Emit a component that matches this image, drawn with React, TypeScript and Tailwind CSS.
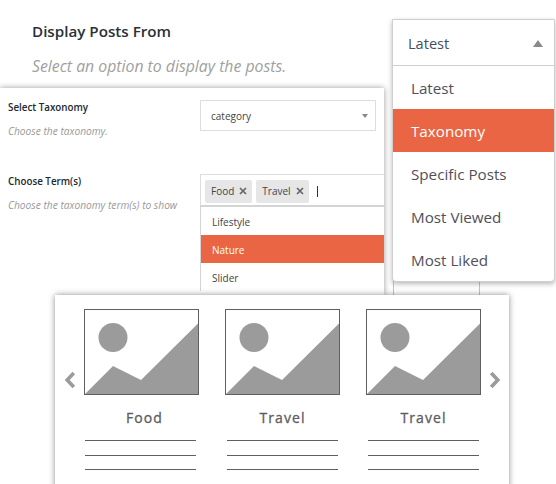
const font = "font-['Open_Sans','Noto_Sans',sans-serif]";

function Placeholder() {
  return (
    <svg width="115" height="86" viewBox="0 0 115 86" className="block">
      <rect x="0.5" y="0.5" width="114" height="85" fill="#fff" stroke="#5f5f5f" />
      <circle cx="29" cy="28.5" r="14.5" fill="#9b9b9b" />
      <path d="M1 85 L29 57 L57 71 L114 14.5 L114 85 Z" fill="#9b9b9b" />
      <path d="M114.5 0.5 V85.5 H0.5" fill="none" stroke="#5f5f5f" />
    </svg>
  );
}

function Card({ label, labelClass, linesClass }: { label: string; labelClass: string; linesClass: string }) {
  return (
    <div className="w-[115px] shrink-0">
      <Placeholder />
      <div className={`mt-[12px] h-[22px] text-center text-[14px] leading-[22px] tracking-[1.1px] text-[#5c5c62] [-webkit-text-stroke:0.3px_#5c5c62] ${labelClass}`}>
        {label}
      </div>
      <div className={`mt-[11px] flex w-[111px] flex-col ${linesClass}`}>
        <div className="h-px bg-[#5f5f5f]" />
        <div className="mt-[14px] h-px bg-[#5f5f5f]" />
        <div className="mt-[13px] h-px bg-[#5f5f5f]" />
      </div>
    </div>
  );
}

function Tag({ label }: { label: string }) {
  return (
    <span className="flex h-[23px] items-center gap-[5px] rounded-[2px] bg-[#e6e6e6] pr-[5px] pl-[6px] text-[10px] text-[#444]">
      {label}
      <svg width="8" height="8" viewBox="0 0 8 8">
        <path d="M1 1 L7 7 M7 1 L1 7" stroke="#666" strokeWidth="1.7" />
      </svg>
    </span>
  );
}

function Arrow({ dir }: { dir: "l" | "r" }) {
  return (
    <svg width="12" height="18" viewBox="0 0 12 18" className="shrink-0">
      <path
        d={dir === "l" ? "M9.8 2 L3.2 9 L9.8 16" : "M2.2 2 L8.8 9 L2.2 16"}
        fill="none"
        stroke="#9b9b9b"
        strokeWidth="3.6"
      />
    </svg>
  );
}

export default function App() {
  const opts = ["Latest", "Taxonomy", "Specific Posts", "Most Viewed", "Most Liked"];
  return (
    <div className={`relative h-[484px] w-[556px] overflow-hidden bg-white ${font}`}>
      {/* Heading */}
      <div className="pt-[21px] pl-[32px]">
        <div className="text-[15.2px] leading-[21px] font-semibold text-[#2b3035]">Display Posts From</div>
        <div className="mt-[13px] text-[15.8px] leading-[22px] text-[#a0a0a0] italic">
          Select an option to display the posts.
        </div>
      </div>

      {/* Element behind the panels */}
      <div className="absolute top-[275px] left-[393px] h-[30px] w-[87px] border-x border-[#c4c4c4]" />

      {/* Main select */}
      <div className="absolute top-[19px] left-[392px] w-[163px] rounded-b-[4px] border border-[#cfcfcf] bg-white shadow-[0_2px_5px_rgba(0,0,0,0.28)]">
        <div className="flex h-[46px] items-center justify-between border-b border-[#cfcfcf] pt-[2px] pr-[11px] pl-[15px] text-[14.6px] text-[#44505c]">
          Latest
          <svg width="10" height="7" viewBox="0 0 10 7">
            <path d="M5 0 L10 7 L0 7 Z" fill="#8a8a8a" />
          </svg>
        </div>
        <div>
          {opts.map((o) => (
            <div
              key={o}
              className={`flex h-[43px] items-center pt-[2px] pl-[18px] text-[15.2px] ${
                o === "Taxonomy" ? "bg-[#e96544] text-white" : "text-[#50505a]"
              }`}
            >
              {o}
            </div>
          ))}
        </div>
      </div>

      {/* Settings panel */}
      <div className="absolute top-[88px] left-0 h-[207px] w-[384px] bg-white shadow-[0_0_6px_rgba(0,0,0,0.4)] [clip-path:inset(-10px_-10px_0_0)]">
        <div className="flex h-[86px] pt-[12px] pr-[8px] pl-[8px]">
          <div className="w-[192px]">
            <div className="text-[9.8px] leading-[16px] font-semibold text-[#23282d]">Select Taxonomy</div>
            <div className="mt-[8px] text-[10.2px] leading-[14px] text-[#999] italic">Choose the taxonomy.</div>
          </div>
          <div className="flex h-[31px] flex-1 items-center justify-between border border-[#ddd] pt-[1px] pr-[7px] pl-[10px] text-[10px] text-[#444]">
            category
            <svg width="6" height="4" viewBox="0 0 6 4">
              <path d="M0 0 H6 L3 4 Z" fill="#888" />
            </svg>
          </div>
        </div>
        <div className="flex pl-[8px]">
          <div className="w-[192px]">
            <div className="text-[9.8px] leading-[16px] font-semibold text-[#23282d]">Choose Term(s)</div>
            <div className="mt-[8px] text-[10.2px] leading-[14px] text-[#999] italic">
              Choose the taxonomy term(s) to show
            </div>
          </div>
          <div className="flex-1">
            <div className="flex h-[31px] items-center gap-[4px] border-t border-l border-[#ddd] pt-[2px] pl-[4px]">
              <Tag label="Food" />
              <Tag label="Travel" />
              <span className="ml-[4px] h-[11px] w-px bg-[#333]" />
            </div>
            <div className="border-t-2 border-l border-[#d4d4d4] text-[10px]">
              <div className="flex h-[28px] items-center pt-[2px] pl-[11px] text-[#444]">Lifestyle</div>
              <div className="flex h-[28px] items-center bg-[#e96544] pt-[2px] pl-[11px] text-white">Nature</div>
              <div className="flex h-[28px] items-center pt-[2px] pl-[11px] text-[#444]">Slider</div>
            </div>
          </div>
        </div>
      </div>

      {/* Preview panel */}
      <div className="absolute top-[295px] left-[55px] h-[220px] w-[454px] bg-white shadow-[0_0_6px_rgba(0,0,0,0.45)]">
        <div className="flex items-start pt-[14px] pl-[9px]">
          <div className="mt-[62px] mr-[8px]">
            <Arrow dir="l" />
          </div>
          <div className="flex gap-[26px]">
            <Card label="Food" labelClass="pl-[6px]" linesClass="ml-[1px]" />
            <Card label="Travel" labelClass="" linesClass="ml-[2px]" />
            <Card label="Travel" labelClass="" linesClass="ml-[2px]" />
          </div>
          <div className="mt-[62px] ml-[8px]">
            <Arrow dir="r" />
          </div>
        </div>
      </div>
    </div>
  );
}
